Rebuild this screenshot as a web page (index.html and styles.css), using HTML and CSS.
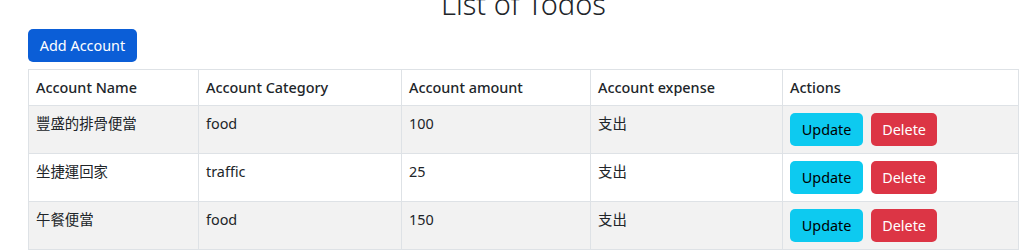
FILE: index.html
```html
<!DOCTYPE html>
<html lang="zh-Hant">
<head>
    <meta charset="UTF-8">
    <meta name="viewport" content="width=device-width, initial-scale=1.0">
    <title>List of Todos</title>
    <link rel="stylesheet" href="styles.css">
</head>
<body>
    <div class="container">
        <h1 class="page-title">List of Todos</h1>

        <button class="btn btn-primary">Add Account</button>

        <table class="account-table">
            <colgroup>
                <col class="col-name">
                <col class="col-category">
                <col class="col-amount">
                <col class="col-expense">
                <col class="col-actions">
            </colgroup>
            <thead>
                <tr>
                    <th>Account Name</th>
                    <th>Account Category</th>
                    <th>Account amount</th>
                    <th>Account expense</th>
                    <th>Actions</th>
                </tr>
            </thead>
            <tbody>
                <tr>
                    <td>豐盛的排骨便當</td>
                    <td>food</td>
                    <td>100</td>
                    <td>支出</td>
                    <td>
                        <div class="actions">
                            <button class="btn btn-info">Update</button>
                            <button class="btn btn-danger">Delete</button>
                        </div>
                    </td>
                </tr>
                <tr>
                    <td>坐捷運回家</td>
                    <td>traffic</td>
                    <td>25</td>
                    <td>支出</td>
                    <td>
                        <div class="actions">
                            <button class="btn btn-info">Update</button>
                            <button class="btn btn-danger">Delete</button>
                        </div>
                    </td>
                </tr>
                <tr>
                    <td>午餐便當</td>
                    <td>food</td>
                    <td>150</td>
                    <td>支出</td>
                    <td>
                        <div class="actions">
                            <button class="btn btn-info">Update</button>
                            <button class="btn btn-danger">Delete</button>
                        </div>
                    </td>
                </tr>
            </tbody>
        </table>
    </div>
</body>
</html>
```

FILE: styles.css
```css
body {
    margin: 0;
    font-family: "Noto Sans", "Noto Sans CJK TC", sans-serif;
    font-size: 14.4px;
    line-height: 21px;
    color: #212529;
    background-color: #fff;
}
.container {
    width: 991px;
    margin-left: 28px;
}
.page-title {
    margin: -13px 0 7px;
    text-align: center;
    font-size: 29px;
    font-weight: 300;
    line-height: 1.2;
    color: #212529;
}
.btn {
    display: inline-block;
    padding: 5px 10.8px;
    font-family: inherit;
    font-size: 14.4px;
    line-height: 21px;
    border: 1px solid transparent;
    border-radius: 5px;
    cursor: pointer;
}
.btn-primary {
    background-color: #0b5ed7;
    color: #fff;
}
.btn-info {
    background-color: #0dcaf0;
    color: #000;
}
.btn-danger {
    padding: 5px 10px;
    background-color: #dc3545;
    color: #fff;
}
.account-table {
    width: 991px;
    margin-top: 7px;
    border-collapse: collapse;
    table-layout: fixed;
}
.col-name { width: 170px; }
.col-category { width: 203px; }
.col-amount { width: 189px; }
.col-expense { width: 192px; }
.account-table th,
.account-table td {
    padding: 7px;
    border: 1px solid #dee2e6;
    text-align: left;
    vertical-align: top;
}
.account-table th {
    font-weight: 500;
}
.account-table tbody tr:nth-child(odd) {
    background-color: #f2f2f2;
}
.actions {
    display: flex;
    gap: 8px;
}
```
